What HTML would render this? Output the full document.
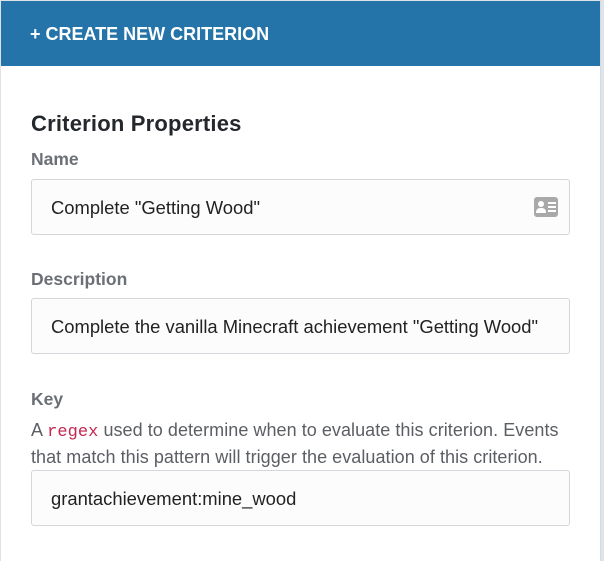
<!DOCTYPE html>
<html><head><style>
body{margin:0;width:604px;height:540px;background:#dfe3e8;font-family:"Liberation Sans",sans-serif;overflow:hidden;position:relative}
.card{position:absolute;left:1px;top:1px;width:599px;height:560px;background:#fff;border-right:1px solid #d5dae0}
.hdr{height:65px;background:#2574a9;color:#fff;font-weight:bold;font-size:18px;line-height:67px;padding-left:29px;letter-spacing:0}
.abs{position:absolute}
h2{position:absolute;left:31px;top:111px;margin:0;font-size:22px;color:#24272c;letter-spacing:0.2px}
.lbl{position:absolute;left:31px;font-size:17.5px;font-weight:bold;color:#6c6f76}
.inp{position:absolute;left:31px;height:54px;border:1px solid #d3d6db;border-radius:3px;background:#fcfcfc;font-size:18.4px;color:#222;line-height:56px;padding-left:19px;box-sizing:content-box;width:518px}
.help{position:absolute;left:31px;top:418px;font-size:18px;color:#5b5e63;line-height:25px;letter-spacing:0.05px}
code{font-family:"Liberation Mono",monospace;color:#c7254e;font-size:17px}
</style></head><body>
<div class="card">
<div class="hdr">+ CREATE NEW CRITERION</div>
</div>
<h2>Criterion Properties</h2>
<div class="lbl" style="top:149px">Name</div>
<div class="inp" style="top:179px">Complete "Getting Wood"
<svg class="abs" style="right:11px;top:17px" width="24" height="20" viewBox="0 0 24 20"><rect x="0" y="0" width="24" height="20" rx="3" fill="#a9a9a9"/><circle cx="7" cy="7" r="3" fill="#fff"/><path d="M2 16c0-4 2-5 5-5s5 1 5 5z" fill="#fff"/><rect x="14" y="5" width="8" height="2" fill="#fff"/><rect x="14" y="9" width="8" height="2" fill="#fff"/><rect x="14" y="13" width="8" height="2" fill="#fff"/></svg></div>
<div class="lbl" style="top:269px">Description</div>
<div class="inp" style="top:298px">Complete the vanilla Minecraft achievement "Getting Wood"</div>
<div class="lbl" style="top:389px">Key</div>
<div class="help">A <code>regex</code> used to determine when to evaluate this criterion. Events<br>that match this pattern will trigger the evaluation of this criterion.</div>
<div class="inp" style="top:470px">grantachievement:mine_wood</div>
</body></html>
